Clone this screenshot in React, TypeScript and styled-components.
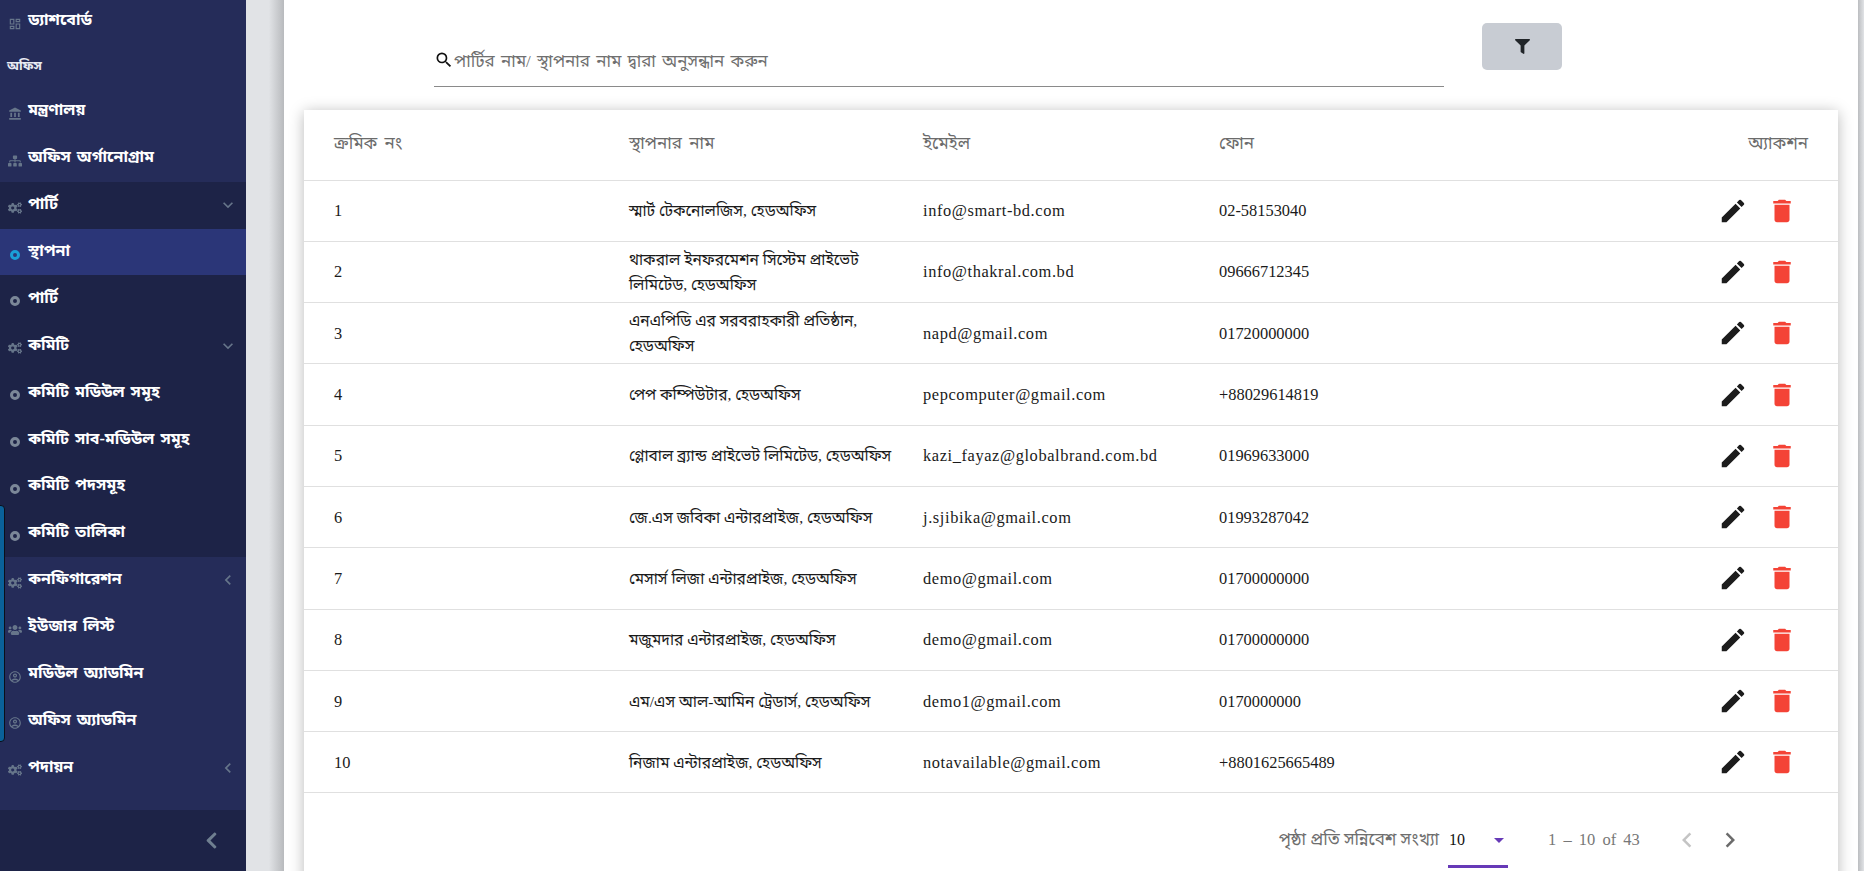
import React from "react";
import styled, { createGlobalStyle } from "styled-components";
import { MdOutlineAccountCircle, MdAccountBalance, MdOutlineDashboard, MdExpandMore, MdChevronLeft, MdChevronRight, MdEdit, MdDelete, MdSearch, MdArrowDropDown } from "react-icons/md";
import { FaChevronLeft, FaCogs, FaFilter, FaSitemap, FaUsers } from "react-icons/fa";

const FONT = `"Liberation Serif", "Noto Sans Bengali", "Noto Serif Bengali", "Lohit Bengali", "FreeSerif", serif`;

const Global = createGlobalStyle`
  html, body { margin: 0; padding: 0; height: 871px; overflow: hidden; background: #e1e3e6; }
  * { box-sizing: border-box; }
  body { font-family: ${FONT}; }
`;

const Page = styled.div`
  display: flex; width: 1864px; height: 871px; overflow: hidden; position: relative;
`;
const Sidebar = styled.aside`
  width: 246px; height: 871px; flex: none; background: #252c59; display: flex; flex-direction: column; position: relative;
`;
const Menu = styled.nav`
  flex: 1; display: flex; flex-direction: column; margin-top: -2px;
`;
const Row = styled.div<{ $tone?: "dark" | "active" }>`
  height: 46.9px; flex: none; display: flex; align-items: center; padding: 0 8px 0 5px; color: #fff;
  font-size: 16px; font-weight: 700; word-spacing: 2px;
  background: ${(p) => (p.$tone === "dark" ? "#1d2347" : p.$tone === "active" ? "#2b3678" : "transparent")};
`;
const Heading = styled.div`
  height: 43px; flex: none; display: flex; align-items: center; padding-left: 7px; color: #e8eaf2; font-size: 13px; font-weight: 700;
`;
const IconSlot = styled.span`
  width: 20px; margin-right: 3px; display: flex; justify-content: center; color: #66758a; font-size: 14px; flex: none; padding-top: 5px;
`;
const Ring = styled.i<{ $on?: boolean }>`
  display: block; width: 10px; height: 10px; border-radius: 50%; border: 3px solid ${(p) => (p.$on ? "#1b9fd8" : "#7b8798")};
`;
const Label = styled.span`
  flex: 1; white-space: nowrap;
`;
const Caret = styled.span`
  color: #66758a; font-size: 20px; display: flex;
`;
const SideFoot = styled.div`
  height: 61px; flex: none; background: #1d2347; display: flex; align-items: center; justify-content: flex-end; padding-right: 25px; color: #6f7f90; font-size: 19px;
`;
const TipEdge = styled.div`
  position: absolute; left: -6px; top: 505px; width: 10.5px; height: 237px; background: #0a6199; border: 1.5px solid #0b0f1a; border-radius: 4px;
`;
const Gutter = styled.div`
  width: 38px; flex: none; background: linear-gradient(90deg, #e1e3e6 0 60%, #b8babd 100%);
`;
const Main = styled.main`
  width: 1574px; flex: none; height: 871px; background: #fff; padding: 23px 20px 0; overflow: hidden;
`;
const EndBar = styled.div`
  flex: 1; background: linear-gradient(90deg, #bbbdc0, #e1e3e6);
`;
const SearchRow = styled.div`
  display: flex; align-items: flex-start; padding-left: 130px; height: 87px;
`;
const SearchBox = styled.div`
  width: 1010px; height: 64px; border-bottom: 1px solid #8a8a8a; display: flex; align-items: center; padding: 16px 0 0; color: #6f6f6f; font-size: 17px; word-spacing: 2px; flex: none;
`;
const SearchIcon = styled.span`
  color: #111; display: flex; font-size: 20px; margin-bottom: 6px;
`;
const FilterBtn = styled.button`
  width: 80px; height: 47px; margin-left: 38px; border: 0; border-radius: 5px; background: #c8ccd3; color: #212529; display: flex; align-items: center; justify-content: center; font-size: 15px;
`;
const Card = styled.section`
  width: 1534px; background: #fff; box-shadow: 0 2px 14px rgba(0,0,0,.28);
`;
const Table = styled.table`
  width: 100%; border-collapse: collapse; table-layout: fixed;
`;
const Th = styled.th<{ $w?: number; $right?: boolean }>`
  height: 70px; font-weight: 400; font-size: 17px; word-spacing: 3px; color: #6b6b6b; border-bottom: 1px solid #e0e0e0; padding: 0;
  text-align: ${(p) => (p.$right ? "right" : "left")};
  width: ${(p) => (p.$w ? `${p.$w}px` : "auto")};
  &:first-child { padding-left: 30px; }
  &:last-child { padding-right: 30px; }
`;
const Td = styled.td`
  height: 61.3px; font-size: 15.5px; color: #1a1a1a; border-bottom: 1px solid #e0e0e0; padding: 0 20px 0 0; line-height: 25px;
  &:first-child { padding-left: 30px; }
`;
const LatinTd = styled(Td)<{ $spread?: boolean }>`
  font-size: 16.4px; letter-spacing: ${(p) => (p.$spread ? "0.6px" : "0")};
`;
const Actions = styled.div`
  display: flex; justify-content: flex-end; gap: 19px; padding-right: 21px; align-items: center;
`;
const Ico = styled.span<{ $c: string }>`
  color: ${(p) => p.$c}; font-size: 30px; display: flex;
`;
const Pager = styled.div`
  height: 94px; display: flex; align-items: center; justify-content: flex-end; color: #6e6e6e; font-size: 17px; padding-right: 87px;
`;
const SizeSelect = styled.div`
  width: 60px; height: 56px; margin-left: 9px; border-bottom: 3px solid #673ab7; display: flex; align-items: center; justify-content: space-between; color: #111; font-size: 16px; padding: 3px 0 0 1px;
`;
const DropArrow = styled.span`
  color: #673ab7; font-size: 24px; display: flex; margin-right: -3px;
`;
const Range = styled.span`
  margin: 0 35px 0 40px; width: 82px; white-space: nowrap; font-size: 16.5px; word-spacing: 3px; color: #777;
`;
const NavBtn = styled.span<{ $off?: boolean }>`
  color: ${(p) => (p.$off ? "#c4c4c4" : "#6b6b6b")}; font-size: 30px; display: flex; width: 43px; justify-content: center;
`;

const rows = [
  ["1", "স্মার্ট টেকনোলজিস, হেডঅফিস", "info@smart-bd.com", "02-58153040"],
  ["2", "থাকরাল ইনফরমেশন সিস্টেম প্রাইভেট লিমিটেড, হেডঅফিস", "info@thakral.com.bd", "09666712345"],
  ["3", "এনএপিডি এর সরবরাহকারী প্রতিষ্ঠান, হেডঅফিস", "napd@gmail.com", "01720000000"],
  ["4", "পেপ কম্পিউটার, হেডঅফিস", "pepcomputer@gmail.com", "+88029614819"],
  ["5", "গ্লোবাল ব্র্যান্ড প্রাইভেট লিমিটেড, হেডঅফিস", "kazi_fayaz@globalbrand.com.bd", "01969633000"],
  ["6", "জে.এস জবিকা এন্টারপ্রাইজ, হেডঅফিস", "j.sjibika@gmail.com", "01993287042"],
  ["7", "মেসার্স লিজা এন্টারপ্রাইজ, হেডঅফিস", "demo@gmail.com", "01700000000"],
  ["8", "মজুমদার এন্টারপ্রাইজ, হেডঅফিস", "demo@gmail.com", "01700000000"],
  ["9", "এম/এস আল-আমিন ট্রেডার্স, হেডঅফিস", "demo1@gmail.com", "0170000000"],
  ["10", "নিজাম এন্টারপ্রাইজ, হেডঅফিস", "notavailable@gmail.com", "+8801625665489"],
];

type MI = { label: string; icon: React.ReactNode; tone?: "dark" | "active"; caret?: "down" | "left" };
const ring = <Ring />;
const items: (MI | string)[] = [
  { label: "ড্যাশবোর্ড", icon: <MdOutlineDashboard /> },
  "অফিস",
  { label: "মন্ত্রণালয়", icon: <MdAccountBalance /> },
  { label: "অফিস অর্গানোগ্রাম", icon: <FaSitemap /> },
  { label: "পার্টি", icon: <FaCogs />, tone: "dark", caret: "down" },
  { label: "স্থাপনা", icon: <Ring $on />, tone: "active" },
  { label: "পার্টি", icon: ring, tone: "dark" },
  { label: "কমিটি", icon: <FaCogs />, tone: "dark", caret: "down" },
  { label: "কমিটি মডিউল সমূহ", icon: ring, tone: "dark" },
  { label: "কমিটি সাব-মডিউল সমূহ", icon: ring, tone: "dark" },
  { label: "কমিটি পদসমূহ", icon: ring, tone: "dark" },
  { label: "কমিটি তালিকা", icon: ring, tone: "dark" },
  { label: "কনফিগারেশন", icon: <FaCogs />, caret: "left" },
  { label: "ইউজার লিস্ট", icon: <FaUsers /> },
  { label: "মডিউল অ্যাডমিন", icon: <MdOutlineAccountCircle /> },
  { label: "অফিস অ্যাডমিন", icon: <MdOutlineAccountCircle /> },
  { label: "পদায়ন", icon: <FaCogs />, caret: "left" },
];

export default function App() {
  return (
    <Page>
      <Global />
      <Sidebar>
        <Menu>
          {items.map((it, i) =>
            typeof it === "string" ? (
              <Heading key={i}>{it}</Heading>
            ) : (
              <Row key={i} $tone={it.tone}>
                <IconSlot>{it.icon}</IconSlot>
                <Label>{it.label}</Label>
                {it.caret && <Caret>{it.caret === "down" ? <MdExpandMore /> : <MdChevronLeft />}</Caret>}
              </Row>
            )
          )}
        </Menu>
        <SideFoot><FaChevronLeft /></SideFoot>
        <TipEdge />
      </Sidebar>
      <Gutter />
      <Main>
        <SearchRow>
          <SearchBox>
            <SearchIcon><MdSearch /></SearchIcon>
            পার্টির নাম/ স্থাপনার নাম দ্বারা অনুসন্ধান করুন
          </SearchBox>
          <FilterBtn aria-label="filter"><FaFilter /></FilterBtn>
        </SearchRow>
        <Card>
          <Table>
            <thead>
              <tr>
                <Th $w={325}>ক্রমিক নং</Th>
                <Th $w={294}>স্থাপনার নাম</Th>
                <Th $w={296}>ইমেইল</Th>
                <Th $w={300}>ফোন</Th>
                <Th $right>অ্যাকশন</Th>
              </tr>
            </thead>
            <tbody>
              {rows.map((r) => (
                <tr key={r[0]}>
                  <LatinTd>{r[0]}</LatinTd>
                  <Td>{r[1]}</Td>
                  <LatinTd $spread>{r[2]}</LatinTd>
                  <LatinTd>{r[3]}</LatinTd>
                  <Td>
                    <Actions>
                      <Ico $c="#1c1c1c"><MdEdit /></Ico>
                      <Ico $c="#f44336"><MdDelete /></Ico>
                    </Actions>
                  </Td>
                </tr>
              ))}
            </tbody>
          </Table>
          <Pager>
            পৃষ্ঠা প্রতি সন্নিবেশ সংখ্যা
            <SizeSelect>10 <DropArrow><MdArrowDropDown /></DropArrow></SizeSelect>
            <Range>1 – 10 of 43</Range>
            <NavBtn $off><MdChevronLeft /></NavBtn>
            <NavBtn><MdChevronRight /></NavBtn>
          </Pager>
        </Card>
      </Main>
      <EndBar />
    </Page>
  );
}
